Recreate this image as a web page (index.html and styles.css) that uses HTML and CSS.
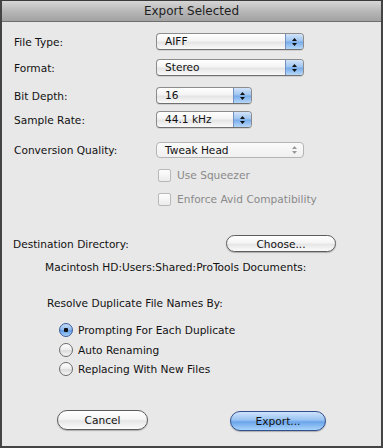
FILE: index.html
```html
<!DOCTYPE html>
<html lang="en">
<head>
    <meta charset="UTF-8">
    <title>Export Selected</title>
    <link rel="stylesheet" href="styles.css">
</head>
<body>
<div class="window">
    <div class="titlebar">Export Selected</div>
    <div class="content">
        <div class="row row-type">
            <span class="label">File Type:</span>
            <div class="popup wide"><span class="value">AIFF</span><span class="arrows"><svg width="7" height="10" viewBox="0 0 7 10"><path d="M3.5 1 L6 4 H1 Z M3.5 9 L6 6 H1 Z" fill="#111"/></svg></span></div>
        </div>
        <div class="row row-format">
            <span class="label">Format:</span>
            <div class="popup wide"><span class="value">Stereo</span><span class="arrows"><svg width="7" height="10" viewBox="0 0 7 10"><path d="M3.5 1 L6 4 H1 Z M3.5 9 L6 6 H1 Z" fill="#111"/></svg></span></div>
        </div>
        <div class="row row-depth">
            <span class="label">Bit Depth:</span>
            <div class="popup narrow"><span class="value">16</span><span class="arrows"><svg width="7" height="10" viewBox="0 0 7 10"><path d="M3.5 1 L6 4 H1 Z M3.5 9 L6 6 H1 Z" fill="#111"/></svg></span></div>
        </div>
        <div class="row row-rate">
            <span class="label">Sample Rate:</span>
            <div class="popup narrow"><span class="value">44.1 kHz</span><span class="arrows"><svg width="7" height="10" viewBox="0 0 7 10"><path d="M3.5 1 L6 4 H1 Z M3.5 9 L6 6 H1 Z" fill="#111"/></svg></span></div>
        </div>
        <div class="row row-quality">
            <span class="label">Conversion Quality:</span>
            <div class="popup wide disabled"><span class="value">Tweak Head</span><span class="arrows"><svg width="7" height="10" viewBox="0 0 7 10"><path d="M3.5 1 L6 4 H1 Z M3.5 9 L6 6 H1 Z" fill="#9a9a9a"/></svg></span></div>
        </div>
        <div class="check-row first"><span class="check"></span>Use Squeezer</div>
        <div class="check-row"><span class="check"></span>Enforce Avid Compatibility</div>

        <div class="dest-row">
            <span class="label dest-label">Destination Directory:</span>
            <button class="pill choose">Choose...</button>
        </div>
        <div class="path">Macintosh HD:Users:Shared:ProTools Documents:</div>

        <div class="resolve">Resolve Duplicate File Names By:</div>
        <div class="radios">
            <div class="radio-row"><span class="radio on"></span>Prompting For Each Duplicate</div>
            <div class="radio-row"><span class="radio"></span>Auto Renaming</div>
            <div class="radio-row"><span class="radio"></span>Replacing With New Files</div>
        </div>

        <div class="actions">
            <button class="pill cancel">Cancel</button>
            <button class="pill default">Export...</button>
        </div>
    </div>
</div>
</body>
</html>
```

FILE: styles.css
```css
body {
    margin: 0;
    font-family: "DejaVu Sans", sans-serif;
    font-size: 10.6px;
    color: #111;
}

.window {
    width: 383px;
    height: 448px;
    box-sizing: border-box;
    border: 2px solid #444;
    border-top: 1px solid #3a3a3a;
    background: #e8e8e8;
}

.titlebar {
    height: 20px;
    line-height: 20px;
    border-bottom: 1px solid #6e6e6e;
    background: linear-gradient(#d6d6d6, #b8b8b8 50%, #a2a2a2);
    text-align: center;
    font-size: 12px;
    color: #1e1e1e;
}

.content {
    padding-left: 12px;
}

/* popup rows */
.row {
    display: flex;
    align-items: center;
    height: 17px;
}

.label {
    width: 142px;
}

.row-type { padding-top: 11px; }
.row-format { margin-top: 9px; }
.row-depth { margin-top: 11px; }
.row-rate { margin-top: 7px; }
.row-quality { margin-top: 13px; }

.popup {
    display: flex;
    height: 15px;
    box-sizing: border-box;
    border: 1px solid #8c8c8c;
    border-bottom-color: #707070;
    border-radius: 4px;
    background: linear-gradient(#ffffff, #f4f4f4 45%, #e4e4e4 55%, #fafafa);
    box-shadow: 0 1px 0 #d0d0d0;
}

.row .popup {
    height: 17px;
}

.popup.wide { width: 148px; }
.popup.narrow { width: 96px; }

.popup .value {
    flex: 1;
    padding-left: 8px;
    line-height: 15px;
}

.popup .arrows {
    width: 17px;
    display: flex;
    align-items: center;
    justify-content: center;
    border-left: 1px solid #7290c2;
    border-radius: 0 3px 3px 0;
    background: linear-gradient(#d2e4f9, #9cc3f0 48%, #74aaea 52%, #b7d8f8);
}

.popup.disabled {
    height: 16px;
    border-color: #b4b4b4;
    box-shadow: none;
    background: linear-gradient(#fbfbfb, #f0f0f0);
}

.popup.disabled .arrows {
    border-left: none;
    background: none;
}

.popup.disabled .value {
    line-height: 14px;
}

/* checkboxes */
.check-row {
    display: flex;
    align-items: center;
    height: 14px;
    margin-left: 144px;
    margin-top: 10px;
    color: #8a8a8a;
}

.check {
    width: 13px;
    height: 13px;
    box-sizing: border-box;
    border: 1px solid #b8b8b8;
    border-radius: 2px;
    background: linear-gradient(#fdfdfd, #ececec);
    margin-right: 6px;
}

/* destination */
.dest-row {
    display: flex;
    align-items: center;
    height: 17px;
    margin-top: 29px;
}

.dest-label {
    width: 213px;
    margin-left: -1px;
}

.pill {
    font-family: inherit;
    font-size: 10.6px;
    color: #111;
    padding: 0;
    border: 1px solid #5c5c5c;
    border-radius: 10px;
    background: linear-gradient(#ffffff, #f5f5f5 45%, #e6e6e6 55%, #fbfbfb);
    box-shadow: 0 1px 1px rgba(0, 0, 0, 0.25);
}

.choose {
    width: 110px;
    height: 17px;
}

.path {
    margin-top: 9px;
    margin-left: 31px;
    line-height: 13px;
}

.resolve {
    margin-top: 23px;
    margin-left: 33px;
    line-height: 13px;
}

.radios {
    margin-top: 13px;
    margin-left: 45px;
}

.radio-row {
    display: flex;
    align-items: center;
    height: 14px;
    margin-bottom: 5.5px;
}

.radio {
    width: 14px;
    height: 14px;
    box-sizing: border-box;
    border: 1px solid #6c6c6c;
    border-radius: 50%;
    background: linear-gradient(#ffffff, #ececec 50%, #dcdcdc 55%, #f6f6f6);
    margin-right: 5px;
}

.radio.on {
    border-color: #3b5a98;
    background: radial-gradient(circle, #111 0, #111 2px, transparent 2.5px),
                linear-gradient(#c5dcf7, #8cb9ee 50%, #5f9be6 55%, #a9d2f8);
}

.actions {
    display: flex;
    margin-top: 34px;
    margin-left: 43px;
}

.cancel {
    width: 91px;
    height: 20px;
}

.default {
    width: 96px;
    height: 20px;
    margin-left: 82px;
    margin-top: 1px;
    border-color: #2f4f8e;
    background: linear-gradient(#cfe3fb, #97c2f1 45%, #6aa4ea 55%, #a9d4fb);
}
```
